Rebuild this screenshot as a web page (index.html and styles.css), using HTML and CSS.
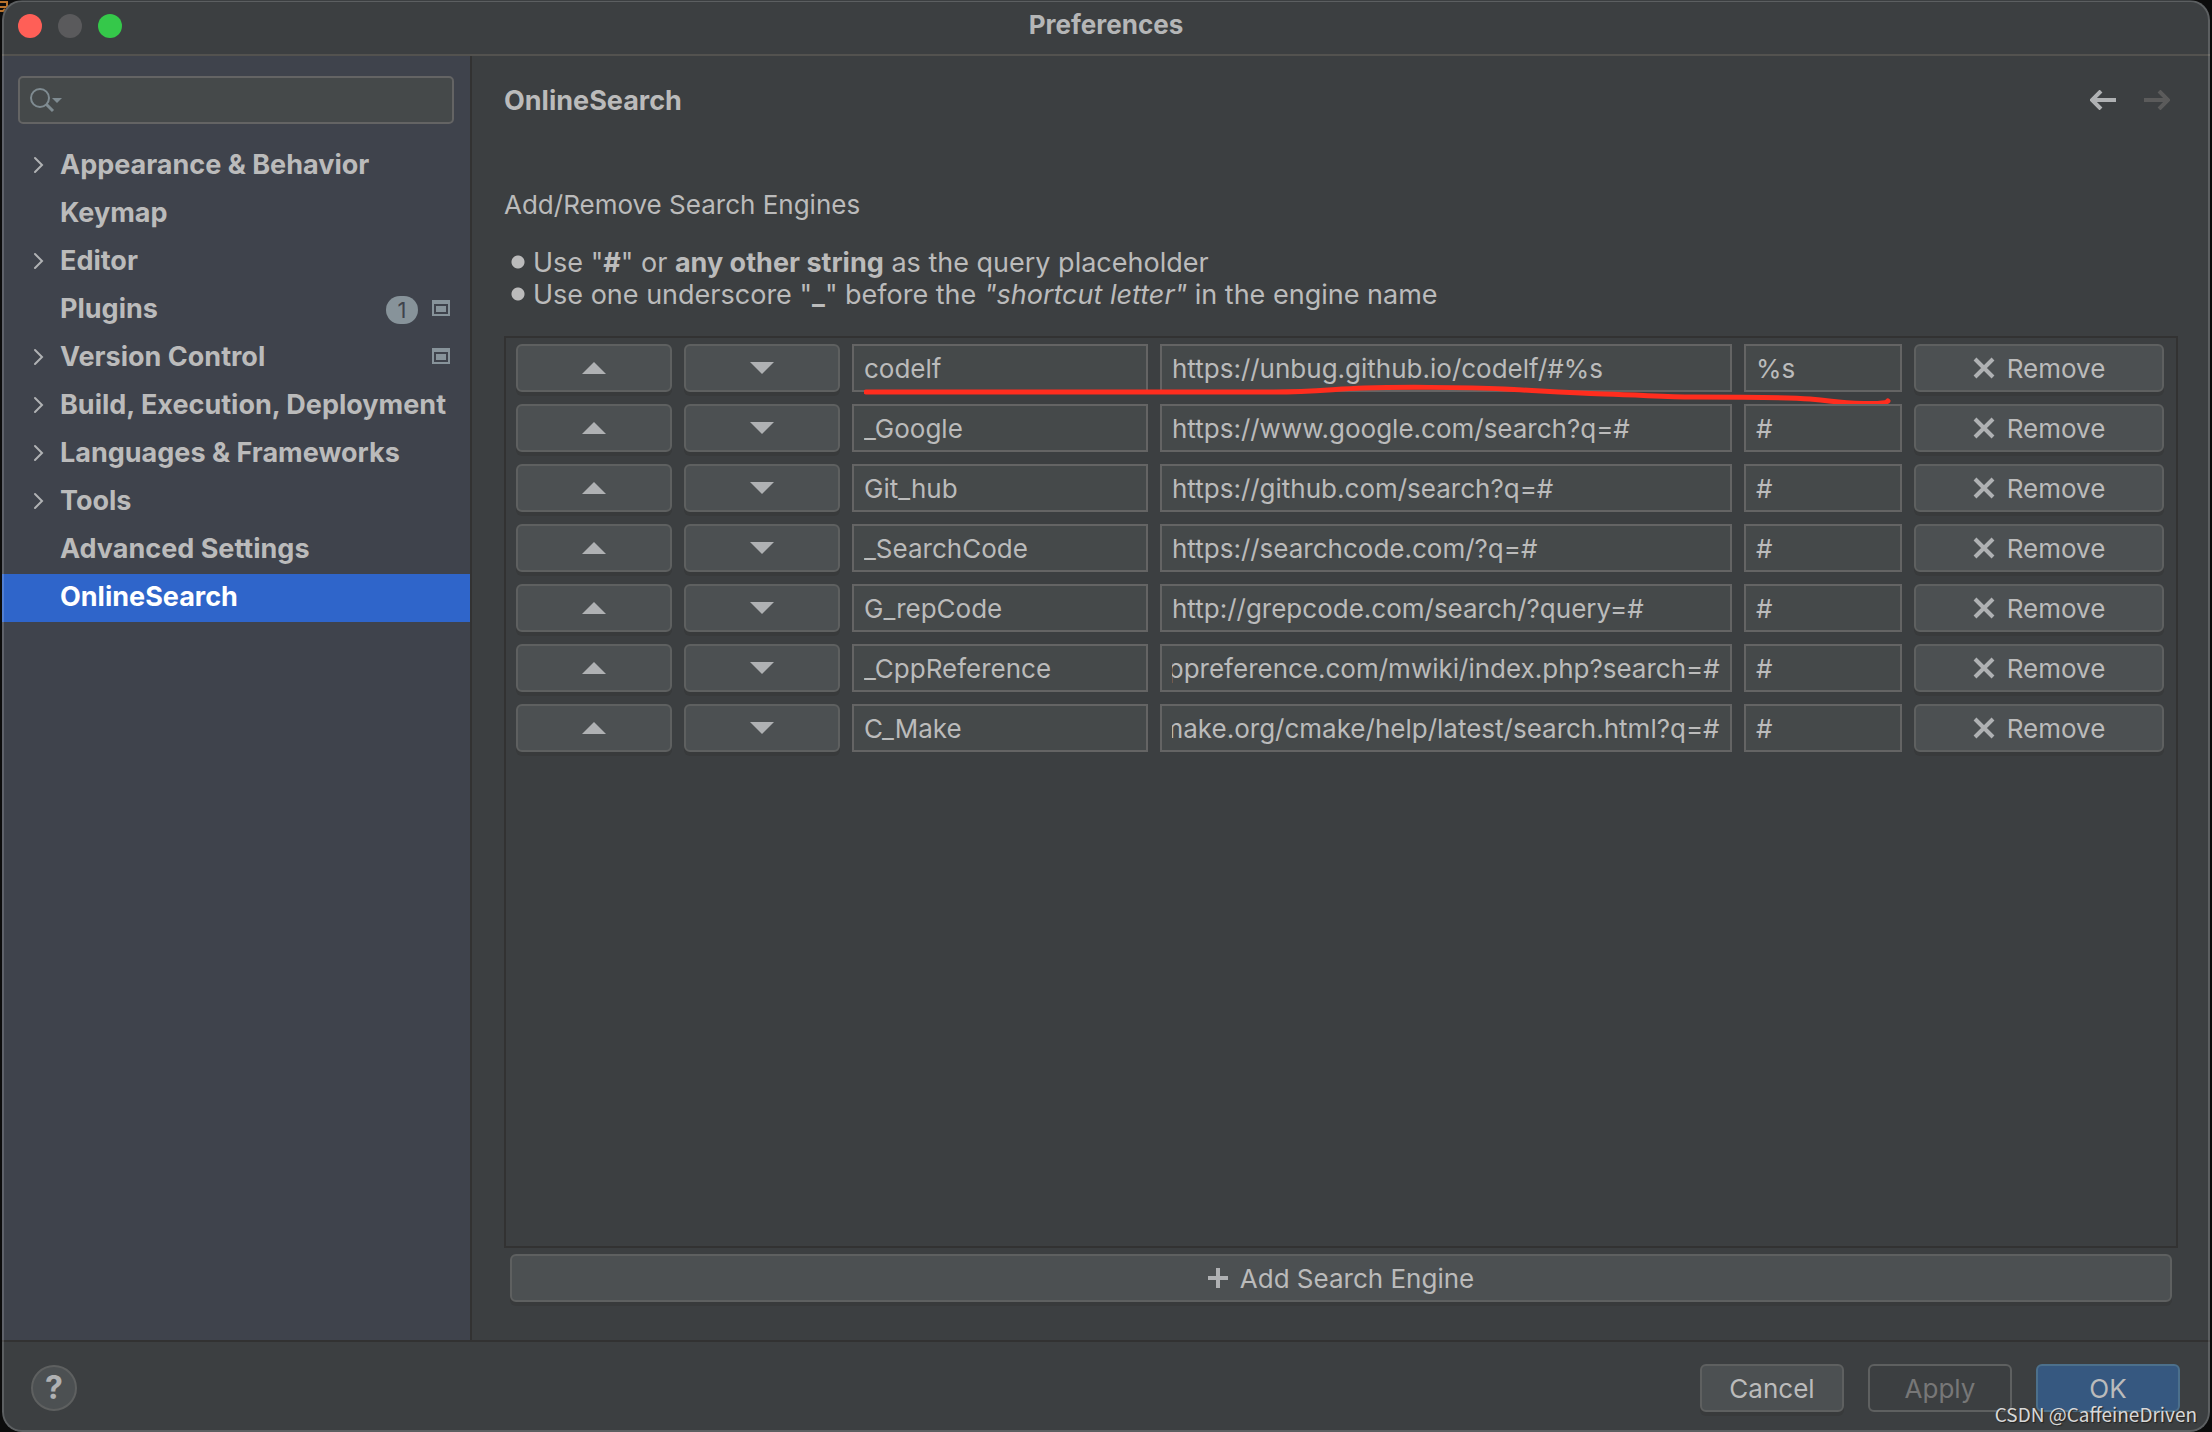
FILE: index.html
```html
<!DOCTYPE html>
<html lang="en">
<head>
<meta charset="utf-8">
<title>Preferences</title>
<link rel="stylesheet" href="styles.css">
</head>
<body>
<svg class="backdrop-mark" viewBox="0 0 12 14" aria-hidden="true"><path d="M0 2h7v5H0M0 11h3l2-2" fill="none" stroke="#b8722c" stroke-width="2"/></svg>
<div class="window">
  <header class="titlebar">
    <div class="lights">
      <button class="light light-close" aria-label="Close"></button>
      <button class="light light-min" aria-label="Minimize" disabled></button>
      <button class="light light-zoom" aria-label="Zoom"></button>
    </div>
    <h1 class="title">Preferences</h1>
  </header>

  <div class="content">
    <aside class="sidebar">
      <div class="search">
        <svg class="search-icon" width="34" height="26" viewBox="0 0 34 26" aria-hidden="true"><circle cx="11" cy="11" r="9" fill="none" stroke="#7f8b91" stroke-width="2"/><path d="M17 17l7 7" stroke="#7f8b91" stroke-width="3"/><path d="M23 11h10l-5 5z" fill="#7f8b91"/></svg>
        <input class="search-input" type="text" aria-label="Search settings">
      </div>
      <nav class="tree" aria-label="Settings">
        <a class="node" href="#appearance"><svg class="chevron" viewBox="0 0 12 18"><path d="M2 2l7 7-7 7"/></svg><span>Appearance &amp; Behavior</span></a>
        <a class="node" href="#keymap"><span class="chevron"></span><span>Keymap</span></a>
        <a class="node" href="#editor"><svg class="chevron" viewBox="0 0 12 18"><path d="M2 2l7 7-7 7"/></svg><span>Editor</span></a>
        <a class="node" href="#plugins"><span class="chevron"></span><span>Plugins</span><span class="count">1</span><svg class="project" viewBox="0 0 18 16"><path d="M0 0h18v16H0zM2 4v10h14V4z" fill-rule="evenodd"/><path d="M4 6h10v6H4z"/></svg></a>
        <a class="node" href="#vcs"><svg class="chevron" viewBox="0 0 12 18"><path d="M2 2l7 7-7 7"/></svg><span>Version Control</span><svg class="project project-end" viewBox="0 0 18 16"><path d="M0 0h18v16H0zM2 4v10h14V4z" fill-rule="evenodd"/><path d="M4 6h10v6H4z"/></svg></a>
        <a class="node" href="#build"><svg class="chevron" viewBox="0 0 12 18"><path d="M2 2l7 7-7 7"/></svg><span>Build, Execution, Deployment</span></a>
        <a class="node" href="#languages"><svg class="chevron" viewBox="0 0 12 18"><path d="M2 2l7 7-7 7"/></svg><span>Languages &amp; Frameworks</span></a>
        <a class="node" href="#tools"><svg class="chevron" viewBox="0 0 12 18"><path d="M2 2l7 7-7 7"/></svg><span>Tools</span></a>
        <a class="node" href="#advanced"><span class="chevron"></span><span>Advanced Settings</span></a>
        <a class="node node-selected" href="#onlinesearch" aria-current="page"><span class="chevron"></span><span>OnlineSearch</span></a>
      </nav>
    </aside>

    <main class="main">
      <div class="page-head">
        <h2 class="page-title">OnlineSearch</h2>
        <div class="history">
          <button class="arrow" aria-label="Back"><svg width="26" height="20" viewBox="0 0 26 20"><path d="M26 10H3M11 1l-9 9 9 9" fill="none" stroke="currentColor" stroke-width="4"/></svg></button>
          <button class="arrow" aria-label="Forward" disabled><svg width="26" height="20" viewBox="0 0 26 20"><path d="M0 10h23M15 1l9 9-9 9" fill="none" stroke="currentColor" stroke-width="4"/></svg></button>
        </div>
      </div>
      <p class="intro">Add/Remove Search Engines</p>
      <ul class="hints">
        <li>Use "<b>#</b>" or <b>any other string</b> as the query placeholder</li>
        <li>Use one underscore "<b>_</b>" before the <i>"shortcut letter"</i> in the engine name</li>
      </ul>

      <ul class="engines">
        <li class="engine">
          <button class="btn" aria-label="Move up"><svg class="tri" viewBox="0 0 24 12"><path d="M0 12L12 0l12 12z"/></svg></button>
          <button class="btn" aria-label="Move down"><svg class="tri" viewBox="0 0 24 12"><path d="M0 0h24L12 12z"/></svg></button>
          <input class="field" aria-label="Name" value="codelf">
          <input class="field" aria-label="URL" value="https://unbug.github.io/codelf/#%s">
          <input class="field" aria-label="Placeholder" value="%s">
          <button class="btn"><svg class="cross" viewBox="0 0 22 22"><path d="M2 2l18 18M20 2L2 20"/></svg>Remove</button>
          <svg class="marker" viewBox="0 0 1028 24" preserveAspectRatio="none" aria-hidden="true"><path d="M2 8H410C450 8 470 5 500 4S600 3 640 5S700 9 740 10S800 13 830 13S920 13 946 15S970 19 1000 19.500Q1022 20 1024 17"/></svg>
        </li>
        <li class="engine">
          <button class="btn" aria-label="Move up"><svg class="tri" viewBox="0 0 24 12"><path d="M0 12L12 0l12 12z"/></svg></button>
          <button class="btn" aria-label="Move down"><svg class="tri" viewBox="0 0 24 12"><path d="M0 0h24L12 12z"/></svg></button>
          <input class="field" aria-label="Name" value="_Google">
          <input class="field" aria-label="URL" value="https://www.google.com/search?q=#">
          <input class="field" aria-label="Placeholder" value="#">
          <button class="btn"><svg class="cross" viewBox="0 0 22 22"><path d="M2 2l18 18M20 2L2 20"/></svg>Remove</button>
        </li>
        <li class="engine">
          <button class="btn" aria-label="Move up"><svg class="tri" viewBox="0 0 24 12"><path d="M0 12L12 0l12 12z"/></svg></button>
          <button class="btn" aria-label="Move down"><svg class="tri" viewBox="0 0 24 12"><path d="M0 0h24L12 12z"/></svg></button>
          <input class="field" aria-label="Name" value="Git_hub">
          <input class="field" aria-label="URL" value="https://github.com/search?q=#">
          <input class="field" aria-label="Placeholder" value="#">
          <button class="btn"><svg class="cross" viewBox="0 0 22 22"><path d="M2 2l18 18M20 2L2 20"/></svg>Remove</button>
        </li>
        <li class="engine">
          <button class="btn" aria-label="Move up"><svg class="tri" viewBox="0 0 24 12"><path d="M0 12L12 0l12 12z"/></svg></button>
          <button class="btn" aria-label="Move down"><svg class="tri" viewBox="0 0 24 12"><path d="M0 0h24L12 12z"/></svg></button>
          <input class="field" aria-label="Name" value="_SearchCode">
          <input class="field" aria-label="URL" value="https://searchcode.com/?q=#">
          <input class="field" aria-label="Placeholder" value="#">
          <button class="btn"><svg class="cross" viewBox="0 0 22 22"><path d="M2 2l18 18M20 2L2 20"/></svg>Remove</button>
        </li>
        <li class="engine">
          <button class="btn" aria-label="Move up"><svg class="tri" viewBox="0 0 24 12"><path d="M0 12L12 0l12 12z"/></svg></button>
          <button class="btn" aria-label="Move down"><svg class="tri" viewBox="0 0 24 12"><path d="M0 0h24L12 12z"/></svg></button>
          <input class="field" aria-label="Name" value="G_repCode">
          <input class="field" aria-label="URL" value="http://grepcode.com/search/?query=#">
          <input class="field" aria-label="Placeholder" value="#">
          <button class="btn"><svg class="cross" viewBox="0 0 22 22"><path d="M2 2l18 18M20 2L2 20"/></svg>Remove</button>
        </li>
        <li class="engine">
          <button class="btn" aria-label="Move up"><svg class="tri" viewBox="0 0 24 12"><path d="M0 12L12 0l12 12z"/></svg></button>
          <button class="btn" aria-label="Move down"><svg class="tri" viewBox="0 0 24 12"><path d="M0 0h24L12 12z"/></svg></button>
          <input class="field" aria-label="Name" value="_CppReference">
          <input class="field" aria-label="URL" value="http://en.cppreference.com/mwiki/index.php?search=#">
          <input class="field" aria-label="Placeholder" value="#">
          <button class="btn"><svg class="cross" viewBox="0 0 22 22"><path d="M2 2l18 18M20 2L2 20"/></svg>Remove</button>
        </li>
        <li class="engine">
          <button class="btn" aria-label="Move up"><svg class="tri" viewBox="0 0 24 12"><path d="M0 12L12 0l12 12z"/></svg></button>
          <button class="btn" aria-label="Move down"><svg class="tri" viewBox="0 0 24 12"><path d="M0 0h24L12 12z"/></svg></button>
          <input class="field" aria-label="Name" value="C_Make">
          <input class="field" aria-label="URL" value="https://cmake.org/cmake/help/latest/search.html?q=#">
          <input class="field" aria-label="Placeholder" value="#">
          <button class="btn"><svg class="cross" viewBox="0 0 22 22"><path d="M2 2l18 18M20 2L2 20"/></svg>Remove</button>
        </li>
      </ul>
      <button class="btn btn-add"><svg class="plus" viewBox="0 0 20 20"><path d="M10 0v20M0 10h20"/></svg>Add Search Engine</button>
    </main>
  </div>

  <footer class="footer">
    <button class="help" aria-label="Help">?</button>
    <div class="actions">
      <button class="btn">Cancel</button>
      <button class="btn" disabled>Apply</button>
      <button class="btn btn-primary">OK</button>
    </div>
  </footer>
</div>
<div class="watermark">CSDN @CaffeineDriven</div>
<script src="script.js"></script>
</body>
</html>
```
FILE: styles.css
```css
* {
  box-sizing: border-box;
}

body {
  position: relative;
  margin: 0;
  padding: 0 2px;
  height: 100vh;
  overflow: hidden;
  background: #0c0c0c;
  color: #bbbbbb;
  font: 26px/32px Inter, "Liberation Sans", sans-serif;
}

button,
input {
  margin: 0;
  color: inherit;
  font: inherit;
}

h1,
h2,
p,
ul {
  margin: 0;
  padding: 0;
  font-size: inherit;
  list-style: none;
}

.backdrop-mark {
  position: absolute;
  left: 0;
  top: 0;
  width: 12px;
  height: 14px;
}

.window {
  position: relative;
  display: flex;
  flex-direction: column;
  height: 100%;
  overflow: hidden;
  border-radius: 20px;
  background: #3c3f41;
}

/* light rim around the whole window */
.window::after {
  content: "";
  position: absolute;
  inset: 0;
  border-radius: 20px;
  box-shadow: inset 0 0 0 2px rgba(255, 255, 255, 0.17);
  clip-path: inset(1px 0 0 0);
  pointer-events: none;
}

.titlebar {
  display: grid;
  grid-template-columns: 1fr auto 1fr;
  align-items: center;
  height: 56px;
  padding: 0 16px 2px;
  border-bottom: 2px solid #53524f;
}

.lights {
  display: flex;
  gap: 16px;
}

.light {
  width: 24px;
  height: 24px;
  padding: 0;
  border: 0;
  border-radius: 50%;
}

.light-close {
  background: #ff5f57;
}

.light-min {
  background: #5a5a5c;
}

.light-zoom {
  background: #35c84a;
}

.title {
  padding-bottom: 2px;
  font-weight: 700;
  color: #b5b6b7;
}

.content {
  display: flex;
  flex: 1;
  min-height: 0;
}

.sidebar {
  width: 470px;
  border-right: 2px solid #323232;
  background: #3f434c;
}

.search {
  display: flex;
  align-items: center;
  height: 48px;
  margin: 20px 16px 18px;
  padding-left: 9px;
  border: 2px solid #646464;
  border-radius: 5px;
  background: #45494a;
}

.search-icon {
  flex: none;
}

.search-input {
  flex: 1;
  min-width: 0;
  height: 100%;
  border: 0;
  outline: 0;
  background: none;
}

.node {
  display: flex;
  align-items: center;
  height: 48px;
  padding: 0 20px 2px 31px;
  color: inherit;
  font-size: 27px;
  font-weight: 700;
  text-decoration: none;
  white-space: nowrap;
}

.node-selected {
  background: #2f65ca;
  color: #ffffff;
}

.chevron {
  flex: none;
  width: 12px;
  height: 18px;
  margin-right: 15px;
  fill: none;
  stroke: #b0b2b4;
  stroke-width: 2;
  stroke-linecap: round;
}

.count {
  width: 32px;
  height: 28px;
  margin: 2px 14px 0 auto;
  border-radius: 14px;
  background: #87939a;
  color: #3f434c;
  font-size: 22px;
  font-weight: 400;
  line-height: 28px;
  text-align: center;
}

.project {
  flex: none;
  width: 18px;
  height: 16px;
  margin-bottom: 2px;
  fill: #87939a;
}

.project-end {
  margin-left: auto;
}

.main {
  display: flex;
  flex: 1;
  flex-direction: column;
  min-width: 0;
  padding: 27px 32px 38px;
}

.page-head {
  display: flex;
  align-items: center;
  justify-content: space-between;
  margin-bottom: 72px;
}

.page-title {
  padding-top: 2px;
  font-size: 27px;
}

.history {
  display: flex;
  gap: 28px;
  padding-right: 8px;
}

.arrow {
  display: flex;
  padding: 0;
  border: 0;
  background: none;
  color: #afb1b3;
}

.arrow:disabled {
  color: #5b5b5b;
}

.hints {
  margin: 26px 0 25px;
  font-size: 27px;
}

.hints li {
  display: block;
  height: 32px;
  padding-left: 29px;
  background: radial-gradient(circle at 14px 15px, #bbbbbb 6px, transparent 7px);
}

.engines {
  display: flex;
  flex: 1;
  flex-direction: column;
  gap: 12px;
  padding: 6px 12px 6px 10px;
  border: 2px solid #323232;
}

.engine {
  position: relative;
  display: grid;
  grid-template-columns: 156px 156px 296fr 572fr 158fr 250px;
  gap: 12px;
}

.field {
  width: 100%;
  min-width: 0;
  height: 48px;
  padding: 0 10px;
  border: 2px solid #646464;
  outline: 0;
  background: #45494a;
}

.btn {
  display: flex;
  align-items: center;
  justify-content: center;
  gap: 12px;
  height: 48px;
  padding: 2px 0 0;
  border: 2px solid #5e6060;
  border-radius: 6px;
  background: #4c5052;
  box-shadow: 0 4px 0 #383a3b;
}

.btn:disabled {
  background: none;
  box-shadow: none;
  color: #777777;
}

.btn-primary {
  border-color: #4c708c;
  background: #365880;
  box-shadow: none;
}

.btn-add {
  margin: 6px 6px 0;
}

.btn svg {
  margin-bottom: 2px;
}

.tri {
  width: 24px;
  height: 12px;
  fill: #afb1b3;
}

.cross {
  width: 22px;
  height: 22px;
  stroke: #afb1b3;
  stroke-width: 4;
}

.plus {
  width: 20px;
  height: 20px;
  stroke: #afb1b3;
  stroke-width: 4;
}

/* hand-drawn underline across the first engine */
.marker {
  position: absolute;
  left: 348px;
  top: 40px;
  width: calc(100% - 620px);
  height: 24px;
  fill: none;
  stroke: #ff2d1e;
  stroke-width: 5;
  stroke-linecap: round;
  stroke-linejoin: round;
  pointer-events: none;
}

.footer {
  display: flex;
  align-items: center;
  justify-content: space-between;
  height: 92px;
  padding: 2px 30px 0 29px;
  border-top: 2px solid #323232;
}

.help {
  width: 46px;
  height: 46px;
  padding: 0;
  border: 2px solid #5e6060;
  border-radius: 50%;
  background: #4c5052;
  color: #afb1b3;
  font-size: 32px;
  font-weight: 700;
}

.actions {
  display: flex;
  gap: 24px;
}

.actions .btn {
  width: 144px;
}

.watermark {
  position: absolute;
  right: 15px;
  bottom: 6px;
  color: #d8d8d8;
  font: 19px/24px "Noto Sans CJK SC", sans-serif;
  text-shadow: 1px 1px 1px #222222;
}
```
FILE: script.js
```js
// Long values show their end, where the query placeholder is.
document.fonts.ready.then(function () {
  document.querySelectorAll(".field").forEach(function (field) {
    field.scrollLeft = field.scrollWidth;
  });
});
```
